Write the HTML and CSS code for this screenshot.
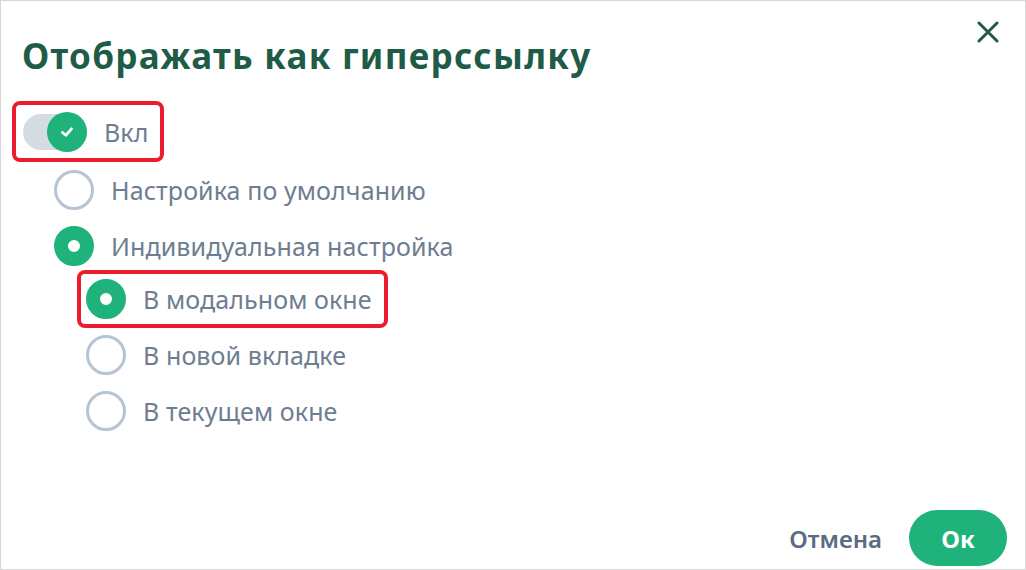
FILE: index.html
```html
<!DOCTYPE html>
<html lang="ru">
<head>
<meta charset="utf-8">
<link rel="stylesheet" href="styles.css">
</head>
<body>
<div class="dialog">
  <div class="header">
    <h1 class="title">Отображать как гиперссылку</h1>
    <button class="close" aria-label="Закрыть">
      <svg width="22" height="22" viewBox="0 0 22 22"><path d="M2 2 L20 20 M20 2 L2 20" stroke="#1e5c47" stroke-width="3" stroke-linecap="round" fill="none"/></svg>
    </button>
  </div>
  <div class="body">
    <div class="toggle-row">
      <span class="toggle">
        <span class="knob">
          <svg width="16" height="16" viewBox="0 0 16 16"><path d="M3.5 8.5 L6.8 11.3 L12.5 4.8" stroke="#fff" stroke-width="2.8" stroke-linecap="round" stroke-linejoin="round" fill="none"/></svg>
        </span>
      </span>
      <span class="label">Вкл</span>
    </div>
    <div class="group">
      <div class="row"><span class="radio"></span><span class="label">Настройка по умолчанию</span></div>
      <div class="row"><span class="radio on"></span><span class="label">Индивидуальная настройка</span></div>
      <div class="sub">
        <div class="row hl2"><span class="radio on"></span><span class="label">В модальном окне</span></div>
        <div class="row"><span class="radio"></span><span class="label">В новой вкладке</span></div>
        <div class="row"><span class="radio"></span><span class="label">В текущем окне</span></div>
      </div>
    </div>
  </div>
  <div class="footer">
    <button class="cancel">Отмена</button>
    <button class="ok">Ок</button>
  </div>
</div>
</body>
</html>
```
FILE: styles.css
```css
* { box-sizing: border-box; }
html, body { margin: 0; padding: 0; background: #fff; }
body { font-family: "Noto Sans", "Open Sans", sans-serif; }
.dialog {
  width: 1026px;
  height: 570px;
  border: 1px solid #d6d6d6;
  display: flex;
  flex-direction: column;
}
.header {
  display: flex;
  justify-content: space-between;
  align-items: flex-start;
  padding: 33px 26px 0 21px;
}
.title {
  margin: 0;
  font-size: 35px;
  line-height: 44px;
  font-weight: 700;
  color: #1e5c47;
  letter-spacing: 1.3px;
}
.close {
  border: 0;
  background: none;
  padding: 0;
  margin-top: -13px;
  width: 22px;
  height: 22px;
  cursor: pointer;
}
.body {
  flex: 1;
  padding: 23px 0 0 11px;
}
.label {
  font-size: 25px;
  color: #6e7d91;
  letter-spacing: 0.1px;
}
.toggle-row {
  display: inline-flex;
  align-items: center;
  gap: 17px;
  border: 4px solid #ea1c2d;
  border-radius: 8px;
  padding: 0 11px 0 7px;
  height: 61px;
}
.toggle {
  position: relative;
  width: 64px;
  height: 36px;
  border-radius: 18px;
  background: #d3dbe3;
  display: block;
}
.knob {
  position: absolute;
  right: 0;
  top: -2px;
  width: 40px;
  height: 40px;
  border-radius: 50%;
  background: #1fb27a;
  display: flex;
  align-items: center;
  justify-content: center;
}
.group { padding-left: 42px; }
.row {
  display: flex;
  align-items: center;
  gap: 17px;
  height: 56px;
}
.radio {
  width: 40px;
  height: 40px;
  border-radius: 50%;
  border: 3px solid #b7c4d3;
  flex: none;
  background: #fff;
}
.radio.on {
  border: 14px solid #1fb27a;
  background: #fff;
}
.sub { padding-left: 32px; }
.hl2 {
  display: inline-flex;
  border: 4px solid #ea1c2d;
  border-radius: 8px;
  margin-left: -9px;
  padding: 0 12px 0 5px;
  height: 58px;
  margin-top: -4px;
  margin-bottom: -1px;
}
.footer {
  display: flex;
  justify-content: flex-end;
  align-items: center;
  gap: 27px;
  padding: 0 18px 3px 0;
}
.cancel {
  border: 0;
  background: none;
  font-family: inherit;
  font-size: 24px;
  font-weight: 600;
  color: #5a6b82;
  padding: 0;
}
.ok {
  border: 0;
  background: #1fb27a;
  color: #fff;
  font-family: inherit;
  font-size: 24px;
  font-weight: 700;
  width: 98px;
  height: 56px;
  border-radius: 28px;
}
```
